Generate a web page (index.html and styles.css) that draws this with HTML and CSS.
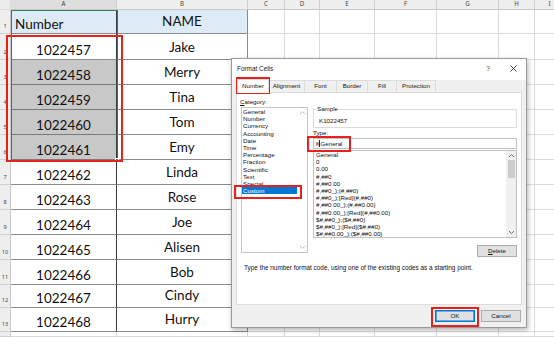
FILE: index.html
```html
<!DOCTYPE html>
<html>
<head>
<meta charset="utf-8">
<link rel="stylesheet" href="styles.css">
</head>
<body>
<div class="sheet">
  <div class="corner"></div><div class="ch cha">A</div><div class="ch">B</div><div class="ch">C</div><div class="ch">D</div><div class="ch">E</div><div class="ch">F</div><div class="ch">G</div><div class="ch">H</div><div class="ch">I</div>

  <div class="rh">1</div><div class="a hd lft">Number</div><div class="b hd">NAME</div><div class="e"></div><div class="e"></div><div class="e"></div><div class="e"></div><div class="e"></div><div class="e"></div><div class="e"></div>
  <div class="rh">2</div><div class="a">1022457</div><div class="b">Jake</div><div class="e"></div><div class="e"></div><div class="e"></div><div class="e"></div><div class="e"></div><div class="e"></div><div class="e"></div>
  <div class="rh">3</div><div class="a sel">1022458</div><div class="b">Merry</div><div class="e"></div><div class="e"></div><div class="e"></div><div class="e"></div><div class="e"></div><div class="e"></div><div class="e"></div>
  <div class="rh">4</div><div class="a sel">1022459</div><div class="b">Tina</div><div class="e"></div><div class="e"></div><div class="e"></div><div class="e"></div><div class="e"></div><div class="e"></div><div class="e"></div>
  <div class="rh">5</div><div class="a sel">1022460</div><div class="b">Tom</div><div class="e"></div><div class="e"></div><div class="e"></div><div class="e"></div><div class="e"></div><div class="e"></div><div class="e"></div>
  <div class="rh">6</div><div class="a sel">1022461</div><div class="b">Emy</div><div class="e"></div><div class="e"></div><div class="e"></div><div class="e"></div><div class="e"></div><div class="e"></div><div class="e"></div>
  <div class="rh">7</div><div class="a">1022462</div><div class="b">Linda</div><div class="e"></div><div class="e"></div><div class="e"></div><div class="e"></div><div class="e"></div><div class="e"></div><div class="e"></div>
  <div class="rh">8</div><div class="a">1022463</div><div class="b">Rose</div><div class="e"></div><div class="e"></div><div class="e"></div><div class="e"></div><div class="e"></div><div class="e"></div><div class="e"></div>
  <div class="rh">9</div><div class="a">1022464</div><div class="b">Joe</div><div class="e"></div><div class="e"></div><div class="e"></div><div class="e"></div><div class="e"></div><div class="e"></div><div class="e"></div>
  <div class="rh">10</div><div class="a">1022465</div><div class="b">Alisen</div><div class="e"></div><div class="e"></div><div class="e"></div><div class="e"></div><div class="e"></div><div class="e"></div><div class="e"></div>
  <div class="rh">11</div><div class="a">1022466</div><div class="b">Bob</div><div class="e"></div><div class="e"></div><div class="e"></div><div class="e"></div><div class="e"></div><div class="e"></div><div class="e"></div>
  <div class="rh">12</div><div class="a">1022467</div><div class="b">Cindy</div><div class="e"></div><div class="e"></div><div class="e"></div><div class="e"></div><div class="e"></div><div class="e"></div><div class="e"></div>
  <div class="rh">13</div><div class="a">1022468</div><div class="b">Hurry</div><div class="e"></div><div class="e"></div><div class="e"></div><div class="e"></div><div class="e"></div><div class="e"></div><div class="e"></div>
  <div class="rh"></div><div class="e"></div><div class="e"></div><div class="e"></div><div class="e"></div><div class="e"></div><div class="e"></div><div class="e"></div><div class="e"></div><div class="e"></div>
</div>

<div class="selbox"></div>
<div class="selhandle"></div>

<div class="dialog">
  <div class="titlebar">
    <span class="title">Format Cells</span>
    <span class="help">?</span>
    <span class="close"><svg width="7" height="7" viewBox="0 0 7 7"><path d="M0.5 0.5L6.5 6.5M6.5 0.5L0.5 6.5" stroke="#333" stroke-width="0.9" fill="none"/></svg></span>
  </div>
  <div class="tabs">
    <div class="tab active">Number</div>
    <div class="tab w-align">Alignment</div>
    <div class="tab w-font">Font</div>
    <div class="tab w-border">Border</div>
    <div class="tab w-fill">Fill</div>
    <div class="tab w-prot">Protection</div>
  </div>
  <div class="panel">
    <div class="cols">
      <div class="left">
        <div class="lbl cat"><u>C</u>ategory:</div>
        <div class="catlist">
          <div class="items">
            <div class="item">General</div>
            <div class="item">Number</div>
            <div class="item">Currency</div>
            <div class="item">Accounting</div>
            <div class="item">Date</div>
            <div class="item">Time</div>
            <div class="item">Percentage</div>
            <div class="item">Fraction</div>
            <div class="item">Scientific</div>
            <div class="item">Text</div>
            <div class="item">Special</div>
            <div class="item chosen">Custom</div>
          </div>
          <div class="vscroll plain">
            <svg class="arr" width="7" height="5" viewBox="0 0 7 5"><path d="M1 4L3.5 1.5L6 4" stroke="#b5b5b5" stroke-width="0.9" fill="none"/></svg>
            <svg class="arr" width="7" height="5" viewBox="0 0 7 5"><path d="M1 1L3.5 3.5L6 1" stroke="#b5b5b5" stroke-width="0.9" fill="none"/></svg>
          </div>
        </div>
      </div>
      <div class="right">
        <fieldset class="sample"><legend>Sample</legend><div class="sampletext">K1022457</div></fieldset>
        <div class="lbl tlabel"><u>T</u>ype:</div>
        <div class="typeinput">K<span class="caret"></span>General</div>
        <div class="typelist">
          <div class="items titems">
            <div class="item">General</div>
            <div class="item">0</div>
            <div class="item">0.00</div>
            <div class="item">#,##0</div>
            <div class="item">#,##0.00</div>
            <div class="item">#,##0_);(#,##0)</div>
            <div class="item">#,##0_);[Red](#,##0)</div>
            <div class="item">#,##0.00_);(#,##0.00)</div>
            <div class="item">#,##0.00_);[Red](#,##0.00)</div>
            <div class="item">$#,##0_);($#,##0)</div>
            <div class="item">$#,##0_);[Red]($#,##0)</div>
            <div class="item">$#,##0.00_);($#,##0.00)</div>
          </div>
          <div class="vscroll bar">
            <svg class="arr" width="7" height="5" viewBox="0 0 7 5"><path d="M1 4L3.5 1.5L6 4" stroke="#606060" stroke-width="0.9" fill="none"/></svg>
            <div class="track"><div class="thumb"></div></div>
            <svg class="arr" width="7" height="5" viewBox="0 0 7 5"><path d="M1 1L3.5 3.5L6 1" stroke="#606060" stroke-width="0.9" fill="none"/></svg>
          </div>
        </div>
        <div class="delrow"><div class="btn"><u>D</u>elete</div></div>
      </div>
    </div>
    <div class="desc">Type the number format code, using one of the existing codes as a starting point.</div>
  </div>
  <div class="buttons">
    <div class="btn ok">OK</div>
    <div class="btn">Cancel</div>
  </div>
</div>

<div class="red r-cells"></div>
<div class="red r-tab"></div>
<div class="red r-custom"></div>
<div class="red r-type"></div>
<div class="red r-ok"></div>
</body>
</html>
```

FILE: styles.css
```css
* { box-sizing: border-box; }
html, body { margin: 0; padding: 0; }
body {
  width: 554px;
  height: 337px;
  overflow: hidden;
  position: relative;
  background: #fff;
  font-family: "Noto Sans", sans-serif;
}

/* ---------- spreadsheet ---------- */
.sheet {
  display: grid;
  width: 565px;
  height: 337px;
  grid-template-columns: 11px 106px 131px 37px 35px 55px 62px 62px 36px 30px;
  grid-template-rows: 10px 24px 26px repeat(9, 25px) 23px 24px 1fr;
}
.sheet > div {
  border-right: 1px solid #dadada;
  border-bottom: 1px solid #dadada;
}
.corner { background: #ececec; }
.sheet > .ch {
  background: #eeeeee;
  border-right-color: #d0d0d0;
  border-bottom-color: #c8c8c8;
  font-size: 6.2px;
  color: #444;
  display: flex;
  align-items: center;
  justify-content: center;
  line-height: 1;
}
.sheet > .cha { background: #dedede; }
.sheet > .rh {
  background: #eeeeee;
  border-right-color: #c8c8c8;
  border-bottom-color: #d0d0d0;
  font-size: 5.6px;
  color: #444;
  display: flex;
  align-items: flex-end;
  justify-content: center;
  padding-bottom: 3px;
  line-height: 1;
}
.a, .b {
  font-family: "Lato", sans-serif;
  font-size: 13.5px;
  color: #111;
  display: flex;
  align-items: flex-end;
  justify-content: center;
  line-height: 1;
  padding-bottom: 2px;
}
.sheet > .a {
  border-right: 1px solid #3a3a3a;
  border-bottom: 1px solid #8a8a8a;
}
.sheet > .b {
  border-right: 1px solid #8a8a8a;
  border-bottom: 1px solid #8a8a8a;
  padding-bottom: 5px;
}
.sheet > .hd { background: #ddebf7; }
.sheet > .b.hd { padding-bottom: 5px; }
.lft { justify-content: flex-start; padding-left: 4px; }
.sheet > .sel { background: #c8c8c8; border-bottom-color: #7a7a7a; }

.selbox {
  position: absolute;
  left: 11px;
  top: 10px;
  width: 107px;
  height: 151px;
  border: 1.5px solid #3a7d55;
}
.selhandle {
  position: absolute;
  left: 115px;
  top: 158px;
  width: 4px;
  height: 4px;
  background: #3a7d55;
  border: 1px solid #fff;
}

/* ---------- dialog ---------- */
.dialog {
  position: absolute;
  left: 231px;
  top: 58px;
  width: 296px;
  height: 270px;
  background: #f0f0f0;
  border: 1px solid #9a9a9a;
  box-shadow: 1px 2px 5px rgba(0, 0, 0, 0.3);
  font-family: "Liberation Sans", Arial, sans-serif;
  font-size: 6.2px;
  color: #111;
  display: flex;
  flex-direction: column;
}
.titlebar {
  height: 21px;
  display: flex;
  align-items: center;
  padding: 0 6px 0 5px;
  background: #fff;
}
.title { font-size: 6.4px; color: #222; margin-top: -3px; }
.help {
  margin-left: auto;
  width: 10px;
  text-align: center;
  font-size: 6.6px;
  color: #333;
  margin-top: -3px;
}
.close {
  width: 14px;
  margin-left: 13px;
  margin-top: -3px;
  display: flex;
  justify-content: center;
}

.tabs {
  height: 12px;
  display: flex;
  align-items: flex-end;
  padding-left: 5px;
  background: #f0f0f0;
}
.tab {
  height: 12px;
  width: 32px;
  border: 1px solid #dcdcdc;
  border-bottom: none;
  border-left: none;
  display: flex;
  align-items: center;
  justify-content: center;
  background: #f0f0f0;
  line-height: 1;
}
.tab.active {
  height: 14px;
  margin-bottom: -1px;
  border-left: 1px solid #dcdcdc;
  background: #fff;
  position: relative;
  z-index: 1;
}
.w-align { width: 36px; }
.w-font { width: 32px; }
.w-border { width: 31px; }
.w-fill { width: 29px; }
.w-prot { width: 39px; }

.panel {
  margin: 0 4px;
  height: 213px;
  border: 1px solid #dcdcdc;
  background: #fff;
  padding: 3px 4px 0 4px;
}
.cols { display: flex; }
.left { width: 67px; }
.right { width: 204px; margin-left: 5px; }
.lbl { line-height: 11px; height: 11px; }
.cat { margin-left: -1px; }

.catlist {
  height: 146px;
  border: 1px solid #c6c6c6;
  display: flex;
}
.items { flex: 1; }
.item {
  height: 7.2px;
  line-height: 7.2px;
  padding-left: 1px;
  white-space: nowrap;
}
.item.chosen { background: #0078d7; color: #fff; }
.vscroll {
  width: 10px;
  display: flex;
  flex-direction: column;
  align-items: center;
  justify-content: space-between;
  padding: 2px 0;
}
.vscroll.bar { background: #f0f0f0; }
.arr { display: block; }
.track { flex: 1; width: 100%; padding: 2px 1.5px; }
.thumb { height: 18px; background: #cdcdcd; }

.sample {
  margin: 9px 0 0 0;
  padding: 0 2px 2px 2px;
  border: 1px solid #dcdcdc;
  min-width: 0;
  height: 23px;
}
.sample legend {
  padding: 0 1px;
  line-height: 8px;
  font-size: 6.2px;
}
.sampletext { margin: 4px 0 0 3px; line-height: 8px; }
.tlabel { height: 10px; line-height: 10px; }
.typeinput {
  height: 11px;
  border: 1px solid #c0c0c0;
  line-height: 9px;
  padding-left: 2px;
  display: flex;
  align-items: center;
}
.caret {
  display: inline-block;
  width: 0.8px;
  height: 7px;
  background: #222;
  margin: 0 0.5px 0 -1px;
}
.typelist {
  margin-top: 1px;
  height: 88px;
  border: 1px solid #c0c0c0;
  display: flex;
  overflow: hidden;
}
.titems .item { padding-left: 2px; }
.delrow { display: flex; justify-content: flex-end; margin-top: 7px; }

.btn {
  width: 40px;
  height: 12px;
  border: 1px solid #adadad;
  background: #e1e1e1;
  display: flex;
  align-items: center;
  justify-content: center;
  line-height: 1;
  font-size: 6.2px;
  color: #111;
}
.btn.ok { border-color: #0078d7; box-shadow: inset 0 0 0 0.6px #0078d7; }

.desc { margin-top: 7px; padding-left: 3px; line-height: 8px; white-space: nowrap; font-size: 6.4px; }

.buttons {
  margin-top: 5px;
  display: flex;
  justify-content: flex-end;
  gap: 6px;
  padding-right: 5px;
}

/* ---------- annotations ---------- */
.red {
  position: absolute;
  border: 2px solid #e5221c;
}
.r-cells { left: 6px; top: 35px; width: 117px; height: 127px; }
.r-tab { left: 236px; top: 77px; width: 34px; height: 17px; }
.r-custom { left: 234px; top: 185px; width: 68px; height: 14px; }
.r-type { left: 307px; top: 136px; width: 44px; height: 16px; }
.r-ok { left: 431px; top: 307px; width: 48px; height: 20px; }
```
